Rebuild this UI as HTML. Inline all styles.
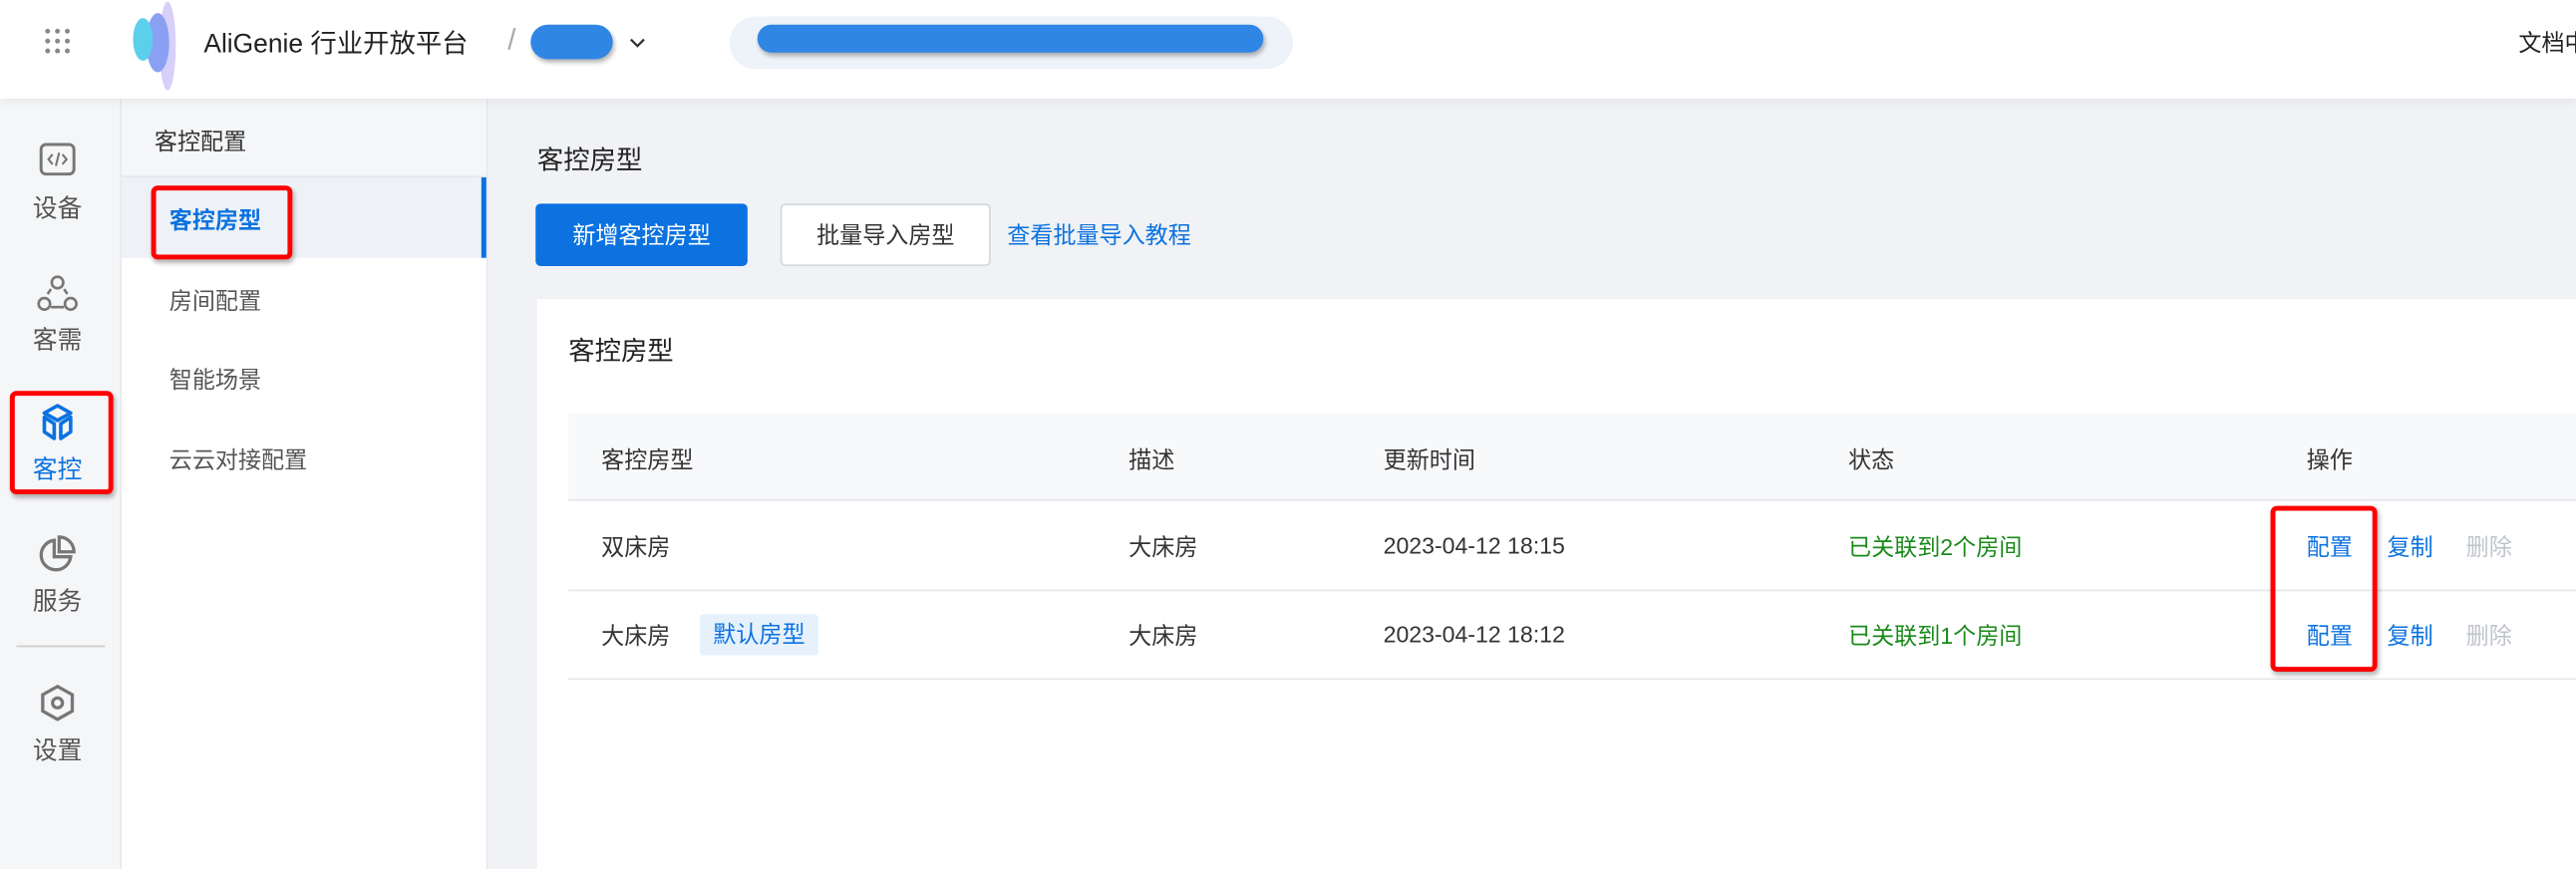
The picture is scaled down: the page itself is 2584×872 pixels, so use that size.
<!DOCTYPE html>
<html><head><meta charset="utf-8"><style>
*{margin:0;padding:0;box-sizing:border-box}
html,body{width:2584px;height:872px;overflow:hidden;background:#f0f2f5}
#w{width:1568px;height:530px;transform:scale(1.648);transform-origin:0 0;position:relative;font-family:"Liberation Sans","Noto Sans CJK SC",sans-serif;color:#333;font-size:14px}
.a{position:absolute;white-space:nowrap}
.red{position:absolute;border:3px solid #f00;border-radius:4px;box-shadow:1px 2px 3px rgba(0,0,0,.3)}
.lbl{position:absolute;left:0;width:70px;text-align:center;font-size:15px;color:#555}
.blue{color:#0b72e0}
</style></head><body><div id="w">
<div class="a" style="left:0;top:0;width:1568px;height:60px;background:#fff;box-shadow:0 2px 6px rgba(0,0,0,.06);z-index:2">
 <svg class="a" style="left:25px;top:15px" width="20" height="20" viewBox="0 0 20 20" fill="#888"><circle cx="4" cy="4" r="1.5"/><circle cx="10" cy="4" r="1.5"/><circle cx="16" cy="4" r="1.5"/><circle cx="4" cy="10" r="1.5"/><circle cx="10" cy="10" r="1.5"/><circle cx="16" cy="10" r="1.5"/><circle cx="4" cy="16" r="1.5"/><circle cx="10" cy="16" r="1.5"/><circle cx="16" cy="16" r="1.5"/></svg>
 <svg class="a" style="left:72px;top:0" width="40" height="56" viewBox="0 0 40 56"><ellipse cx="30" cy="28" rx="5" ry="27" fill="#d7d0fb"/><ellipse cx="24" cy="26" rx="7" ry="18" fill="#8aa0f2"/><ellipse cx="15" cy="24" rx="6" ry="13" fill="#5ad0ec"/></svg>
 <div class="a" style="left:124px;top:13px;font-size:16px;color:#222">AliGenie 行业开放平台</div>
 <div class="a" style="left:309px;top:14px;font-size:18px;color:#aaa">/</div>
 <div class="a" style="left:323px;top:15px;width:50px;height:21px;border-radius:11px;background:#2f86e4;box-shadow:1px 2px 3px rgba(0,0,0,.3)"></div>
 <svg class="a" style="left:383px;top:22px" width="10" height="8" viewBox="0 0 10 8" fill="none" stroke="#333" stroke-width="1.4"><path d="M1 2l4 4 4-4"/></svg>
 <div class="a" style="left:444px;top:10px;width:343px;height:32px;border-radius:16px;background:#eef2f9"></div>
 <div class="a" style="left:461px;top:15px;width:308px;height:17px;border-radius:9px;background:#2f86e4;box-shadow:1px 2px 3px rgba(0,0,0,.3)"></div>
 <div class="a" style="left:1533px;top:16px;font-size:14px;color:#222">文档中心</div>
</div>
<div class="a" style="left:0;top:60px;width:74px;height:470px;background:#f5f6f8;border-right:1px solid #e6e8eb">
 <svg class="a" style="left:23px;top:25px" width="24" height="24" viewBox="0 0 24 24" fill="none" stroke="#777" stroke-width="1.8"><rect x="2" y="3" width="20" height="18" rx="3"/><path d="M9 9l-2.5 3L9 15M15 9l2.5 3L15 15M13 8l-2 8" stroke-width="1.3"/></svg>
 <div class="lbl" style="top:56px">设备</div>
 <svg class="a" style="left:22px;top:107px" width="26" height="24" viewBox="0 0 26 24" fill="none" stroke="#777" stroke-width="1.6"><circle cx="13" cy="5" r="3.5"/><circle cx="5" cy="18" r="3.5"/><circle cx="21" cy="18" r="3.5"/><path d="M9 20h8M7 12l2-3M19 12l-2-3"/></svg>
 <div class="lbl" style="top:136px">客需</div>
 <svg class="a" style="left:23px;top:185px" width="24" height="24" viewBox="0 0 24 24" fill="none" stroke="#0b72e0" stroke-width="2.2" stroke-linejoin="round"><path d="M12 2l8 4.5-8 4.5-8-4.5z"/><path d="M4 9v9l6 4v-9zM20 9v9l-6 4v-9z"/></svg>
 <div class="lbl blue" style="top:215px">客控</div>
 <svg class="a" style="left:23px;top:265px" width="24" height="24" viewBox="0 0 24 24" fill="none" stroke="#777" stroke-width="2"><path d="M10 4a9 9 0 1 0 10 10H10z"/><path d="M13 2a9 9 0 0 1 9 9h-9z"/></svg>
 <div class="lbl" style="top:295px">服务</div>
 <div class="a" style="left:10px;top:333px;width:54px;height:1px;background:#ccc"></div>
 <svg class="a" style="left:23px;top:356px" width="24" height="24" viewBox="0 0 24 24" fill="none" stroke="#777" stroke-width="2"><path d="M12 2l9 5v10l-9 5-9-5V7z"/><circle cx="12" cy="12" r="3"/></svg>
 <div class="lbl" style="top:386px">设置</div>
</div>
<div class="red" style="left:6px;top:238px;width:63px;height:63px"></div>
<div class="a" style="left:74px;top:60px;width:223px;height:470px;background:#fff;border-right:1px solid #e6e8eb">
 <div class="a" style="left:0;top:0;width:222px;height:48px;background:#f5f6f8;border-bottom:1px solid #e4e6ea"></div>
 <div class="a" style="left:20px;top:16px;font-size:14px;color:#333">客控配置</div>
 <div class="a" style="left:0;top:48px;width:222px;height:49px;background:#eef1f6;border-right:3px solid #0b72e0"></div>
 <div class="a blue" style="left:29px;top:64px;font-size:14px;font-weight:bold">客控房型</div>
 <div class="a" style="left:29px;top:113px;color:#555">房间配置</div>
 <div class="a" style="left:29px;top:161px;color:#555">智能场景</div>
 <div class="a" style="left:29px;top:210px;color:#555">云云对接配置</div>
</div>
<div class="red" style="left:92px;top:113px;width:86px;height:45px"></div>
<div class="a" style="left:327px;top:84px;font-size:16px;color:#222">客控房型</div>
<div class="a" style="left:326px;top:124px;width:129px;height:38px;background:#0b72e0;border-radius:3px;color:#fff;text-align:center;line-height:38px">新增客控房型</div>
<div class="a" style="left:475px;top:124px;width:128px;height:38px;background:#fff;border:1px solid #d4d7dc;border-radius:3px;color:#333;text-align:center;line-height:36px">批量导入房型</div>
<div class="a blue" style="left:613px;top:133px">查看批量导入教程</div>
<div class="a" style="left:327px;top:182px;width:1241px;height:348px;background:#fff">
 <div class="a" style="left:19px;top:18px;font-size:16px;color:#222">客控房型</div>
 <div class="a" style="left:19px;top:70px;width:1222px;height:53px;background:#f8f9fb;border-bottom:1px solid #e4e6ea"></div>
 <div class="a" style="left:39px;top:88px">客控房型</div>
 <div class="a" style="left:360px;top:88px">描述</div>
 <div class="a" style="left:515px;top:88px">更新时间</div>
 <div class="a" style="left:798px;top:88px">状态</div>
 <div class="a" style="left:1077px;top:88px">操作</div>
 <div class="a" style="left:19px;top:177px;width:1222px;height:1px;background:#e4e6ea"></div>
 <div class="a" style="left:19px;top:231px;width:1222px;height:1px;background:#e4e6ea"></div>
 <div class="a" style="left:39px;top:141px">双床房</div>
 <div class="a" style="left:360px;top:141px">大床房</div>
 <div class="a" style="left:515px;top:142px">2023-04-12 18:15</div>
 <div class="a" style="left:798px;top:141px;color:#1a8a1a">已关联到2个房间</div>
 <div class="a blue" style="left:1077px;top:141px">配置</div>
 <div class="a blue" style="left:1126px;top:141px">复制</div>
 <div class="a" style="left:1174px;top:141px;color:#c0c4cc">删除</div>
 <div class="a" style="left:39px;top:195px">大床房</div>
 <div class="a blue" style="left:99px;top:192px;width:72px;height:25px;background:#e6f1fc;border-radius:2px;text-align:center;line-height:25px">默认房型</div>
 <div class="a" style="left:360px;top:195px">大床房</div>
 <div class="a" style="left:515px;top:196px">2023-04-12 18:12</div>
 <div class="a" style="left:798px;top:195px;color:#1a8a1a">已关联到1个房间</div>
 <div class="a blue" style="left:1077px;top:195px">配置</div>
 <div class="a blue" style="left:1126px;top:195px">复制</div>
 <div class="a" style="left:1174px;top:195px;color:#c0c4cc">删除</div>
</div>
<div class="red" style="left:1382px;top:308px;width:65px;height:101px"></div>
</div></body></html>
